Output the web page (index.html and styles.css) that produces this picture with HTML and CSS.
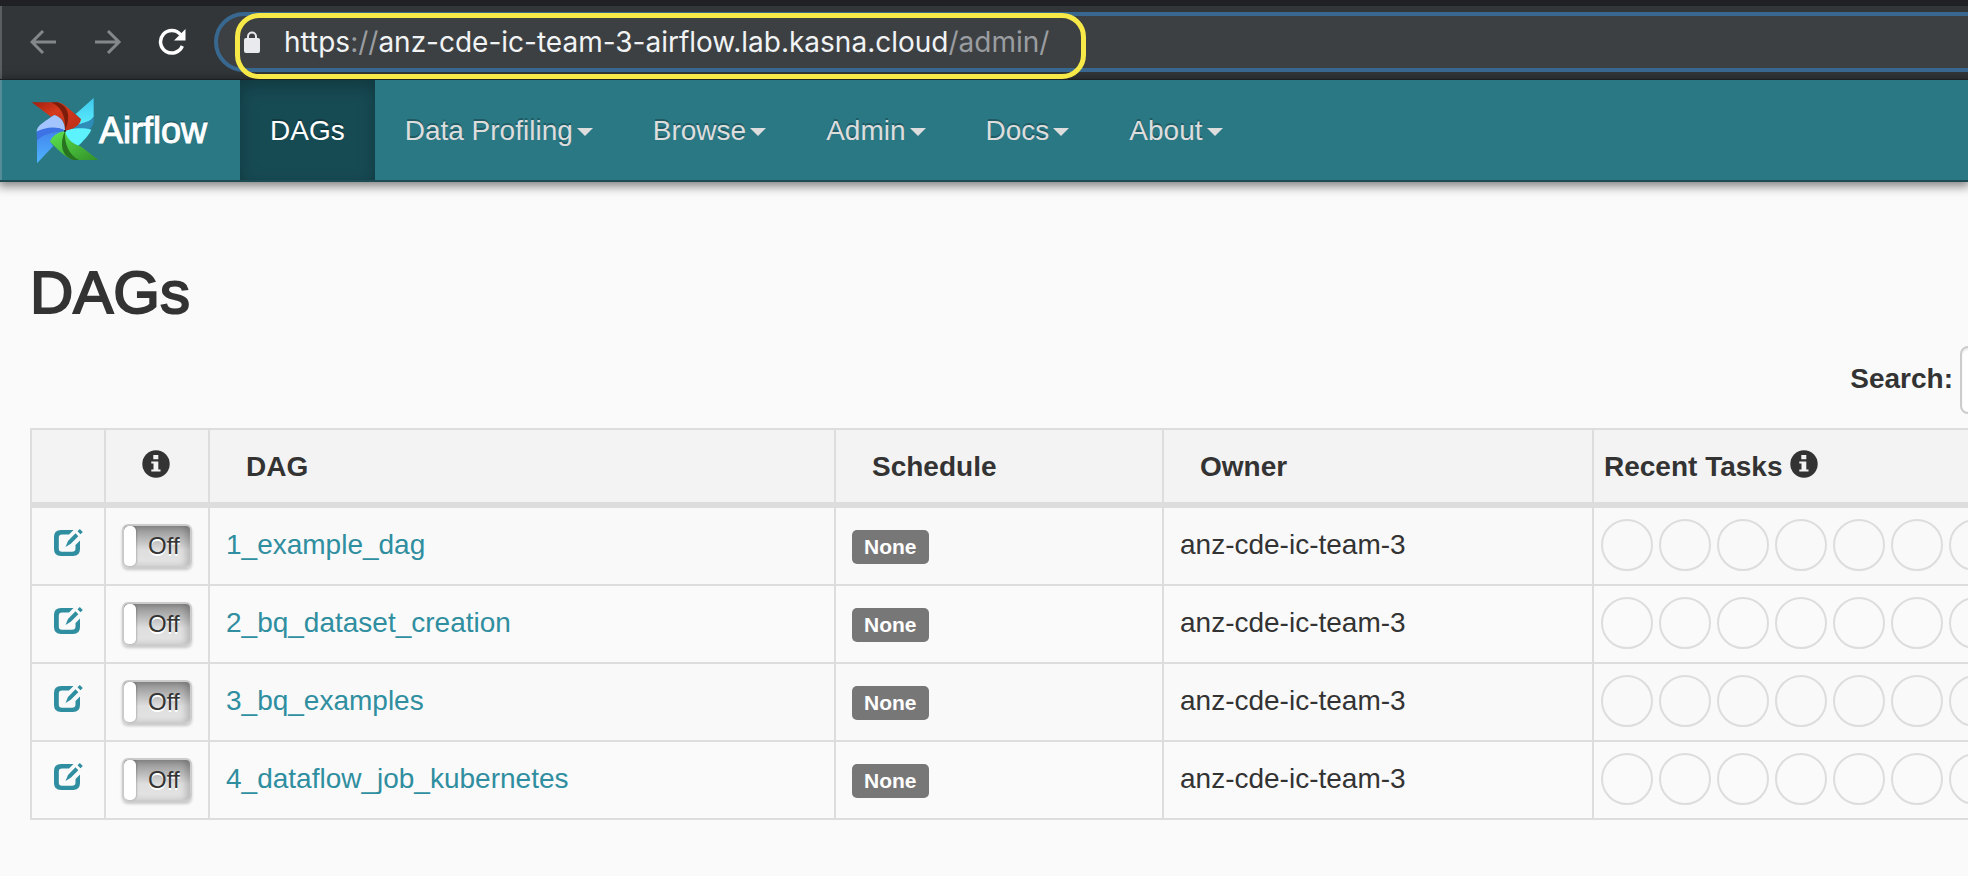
FILE: index.html
```html
<!DOCTYPE html>
<html lang="en">
<head>
<meta charset="utf-8">
<title>Airflow - DAGs</title>
<link rel="stylesheet" href="styles.css">
</head>
<body>
<svg class="defs" aria-hidden="true">
  <symbol id="edit" viewBox="0 0 30 30">
    <path d="M19.500 2H7Q0 2 0 9V21Q0 28 7 28H19Q26 28 26 21V12.500L21.500 17V20.500Q21.500 23.800 18 23.800H8Q4.800 23.800 4.800 20.500V9.500Q4.800 6.500 8 6.500H15Z" fill="currentColor"/>
    <path d="M11.500 19L14 13L21.500 5.300L24.300 8.200L16.800 15.800Z M23.500 3.300L25.800 1L28.800 4L26.500 6.300Z" fill="currentColor"/>
  </symbol>
  <symbol id="info" viewBox="0 0 28 28">
    <circle cx="14" cy="14" r="13.700" fill="currentColor"/>
    <path d="M11.300 5H16.300V9.300H11.300Z M9.300 11.500H16.300V19.500H18.500V21.500H9.300V19.500H11.500V13.500H9.300Z" fill="#f3f3f3"/>
  </symbol>
</svg>

<header class="browser">
  <button class="tool" aria-label="Back"><svg width="28" height="26" viewBox="0 0 28 26"><path d="M26 13H3M13 2L2 13L13 24" fill="none" stroke="#85888a" stroke-width="3"/></svg></button>
  <button class="tool" aria-label="Forward"><svg width="28" height="26" viewBox="0 0 28 26"><path d="M1 13H25M14 2L25 13L14 24" fill="none" stroke="#85888a" stroke-width="3"/></svg></button>
  <button class="tool" aria-label="Reload"><svg width="28" height="28" viewBox="0 0 28 28"><path d="M22.500 6.500A11.300 11.300 0 1 0 24.300 18" fill="none" stroke="#fff" stroke-width="3.500"/><path d="M27.500 1V12.500H16Z" fill="#fff"/></svg></button>
  <div class="address">
    <div class="marked">
      <svg class="lock" width="16" height="22" viewBox="0 0 16 22"><path d="M4 9V5.500A4 4 0 0 1 12 5.500V9" fill="none" stroke="#e8eaed" stroke-width="2"/><rect y="7" width="16" height="15" rx="2" fill="#e8eaed"/></svg>
      <span class="url">https<span class="dim">://</span>anz-cde-ic-team-3-airflow.lab.kasna.cloud<span class="dim">/admin/</span></span>
    </div>
  </div>
</header>

<nav class="navbar">
  <a class="brand" href="#">
    <svg width="68" height="68" viewBox="33 21 204 204" aria-hidden="true">
      <defs>
        <linearGradient id="red" x2="1" y2="1"><stop offset="0" stop-color="#a31d0c"/><stop offset=".4" stop-color="#d53a1d"/><stop offset="1" stop-color="#b92f17"/></linearGradient>
        <linearGradient id="cyan" x2="0" y2="1"><stop offset="0" stop-color="#3fc8ee"/><stop offset="1" stop-color="#5ff4ff"/></linearGradient>
        <linearGradient id="blue" x2="0" y2="1"><stop offset="0" stop-color="#4385ee"/><stop offset="1" stop-color="#4eb4ff"/></linearGradient>
        <linearGradient id="green" x2="1" y2="1"><stop offset="0" stop-color="#5fe552"/><stop offset="1" stop-color="#319127"/></linearGradient>
      </defs>
      <path d="M221 24L167 72L183 88L135 123C165 110 205 105 221 80Z" fill="url(#cyan)"/>
      <path d="M135 123C165 98 207 102 221 80V94C220 111 209 120 195 126Z" fill="#2f8bb8"/>
      <path d="M135 123C150 114 190 112 214 119C208 134 186 157 174 168C150 157 137 143 135 123Z" fill="#5cf3ff"/>
      <path d="M35 37H112C125 37 138 48 183 88C181 102 170 115 135 123C135 98 128 85 103 75L93 80Z" fill="url(#red)"/>
      <path d="M94 37H112C150 50 151 85 135 123C139 83 125 50 94 37Z" fill="#7c1d0b"/>
      <path d="M50 125C52 108 62 102 103 75C126 82 135 100 135 123C112 106 72 118 50 125Z" fill="#a3c4ff"/>
      <path d="M50 125C72 113 112 106 135 123C110 124 72 130 51 157Z" fill="#3d72e4"/>
      <path d="M51 220V151C70 132 100 126 135 123L90 154L100 168Z" fill="url(#blue)"/>
      <path d="M135 123C140 143 151 160 184 170L235 210H162C145 207 127 192 90 155C96 139 110 128 135 123Z" fill="url(#green)"/>
      <path d="M135 123C133 160 145 194 177 210H162C128 202 116 165 135 123Z" fill="#28731f"/>
      <circle cx="135" cy="123" r="3" fill="#0c1c20"/>
    </svg>
    <span>Airflow</span>
  </a>
  <a class="item active" href="#">DAGs</a>
  <a class="item" href="#">Data Profiling<i class="caret"></i></a>
  <a class="item" href="#">Browse<i class="caret"></i></a>
  <a class="item" href="#">Admin<i class="caret"></i></a>
  <a class="item" href="#">Docs<i class="caret"></i></a>
  <a class="item" href="#">About<i class="caret"></i></a>
</nav>

<main class="content">
  <h2>DAGs</h2>
  <div class="filter">
    <label for="search">Search:</label>
    <input id="search" type="search">
  </div>
  <table class="dags">
    <colgroup><col class="c-edit"><col class="c-toggle"><col class="c-dag"><col class="c-schedule"><col class="c-owner"><col></colgroup>
    <thead>
      <tr>
        <th></th>
        <th><svg class="info" role="img" aria-label="Info"><use href="#info"/></svg></th>
        <th>DAG</th>
        <th>Schedule</th>
        <th>Owner</th>
        <th class="recent">Recent Tasks<svg class="info" role="img" aria-label="Info"><use href="#info"/></svg></th>
      </tr>
    </thead>
    <tbody>
      <tr>
        <td><a href="#" aria-label="Edit"><svg class="edit"><use href="#edit"/></svg></a></td>
        <td><label class="toggle"><input type="checkbox">Off</label></td>
        <td><a href="#">1_example_dag</a></td>
        <td><span class="badge">None</span></td>
        <td>anz-cde-ic-team-3</td>
        <td><div class="tasks"><i></i><i></i><i></i><i></i><i></i><i></i><i></i></div></td>
      </tr>
      <tr>
        <td><a href="#" aria-label="Edit"><svg class="edit"><use href="#edit"/></svg></a></td>
        <td><label class="toggle"><input type="checkbox">Off</label></td>
        <td><a href="#">2_bq_dataset_creation</a></td>
        <td><span class="badge">None</span></td>
        <td>anz-cde-ic-team-3</td>
        <td><div class="tasks"><i></i><i></i><i></i><i></i><i></i><i></i><i></i></div></td>
      </tr>
      <tr>
        <td><a href="#" aria-label="Edit"><svg class="edit"><use href="#edit"/></svg></a></td>
        <td><label class="toggle"><input type="checkbox">Off</label></td>
        <td><a href="#">3_bq_examples</a></td>
        <td><span class="badge">None</span></td>
        <td>anz-cde-ic-team-3</td>
        <td><div class="tasks"><i></i><i></i><i></i><i></i><i></i><i></i><i></i></div></td>
      </tr>
      <tr>
        <td><a href="#" aria-label="Edit"><svg class="edit"><use href="#edit"/></svg></a></td>
        <td><label class="toggle"><input type="checkbox">Off</label></td>
        <td><a href="#">4_dataflow_job_kubernetes</a></td>
        <td><span class="badge">None</span></td>
        <td>anz-cde-ic-team-3</td>
        <td><div class="tasks"><i></i><i></i><i></i><i></i><i></i><i></i><i></i></div></td>
      </tr>
    </tbody>
  </table>
</main>
</body>
</html>
```
FILE: styles.css
```css
* { box-sizing: border-box; }

html, body { overflow: hidden; }

body {
  margin: 0;
  min-height: 100vh;
  background: #fafafa;
  color: #333;
  font: 28px/40px "Liberation Sans", Arial, sans-serif;
}

a { color: #2f8e9f; text-decoration: none; }
svg { display: block; flex: none; }
.defs { position: absolute; width: 0; height: 0; }

/* Browser toolbar */
.browser {
  display: flex;
  align-items: center;
  height: 80px;
  padding: 0 0 2px 30px;
  border-top: 6px solid #202124;
  border-bottom: 1px solid #26292b;
  background: #323639;
  box-shadow: inset 2px 0 #5b5e60;
}

.tool {
  display: flex;
  padding: 0;
  margin-right: 36px;
  border: 0;
  background: none;
}

.tool + .tool + .tool { margin-right: 28px; }

.address {
  display: flex;
  flex: 1;
  align-items: center;
  height: 60px;
  padding-left: 17px;
  margin-right: -40px;
  border: 4px solid #38688f;
  border-radius: 30px;
  background: #3c4043;
}

.marked {
  display: flex;
  flex: none;
  align-items: center;
  gap: 24px;
  width: 851px;
  height: 66px;
  padding: 0 0 8px 4px;
  margin-top: 8px;
  border: 5px solid #f7e948;
  border-radius: 24px;
}

.url {
  color: #f1f3f4;
  font: 28px/40px Inter, Roboto, sans-serif;
  white-space: nowrap;
}

.dim { color: #9a9da0; }

/* Airflow navigation */
.navbar {
  display: flex;
  height: 102px;
  border-bottom: 2px solid #1c4b53;
  background: #2a7884;
  box-shadow: inset 2px 0 #548d97, 0 2px 10px 2px rgba(0, 0, 0, .5);
}

.brand {
  display: flex;
  align-items: center;
  width: 240px;
  padding: 2px 0 0 31px;
  color: #fff;
  font-size: 36px;
  text-shadow: 0 -2px 0 rgba(0, 0, 0, .25);
  -webkit-text-stroke: 1px currentColor;
}

.item {
  display: flex;
  align-items: center;
  padding: 2px 30px 0;
  color: #ddd;
  text-shadow: 0 -2px 0 rgba(0, 0, 0, .25);
}

.active {
  color: #fff;
  background: #174b54;
  box-shadow: inset 0 6px 18px rgba(0, 0, 0, .25);
}

.caret {
  margin: 2px 0 0 4px;
  border: 8px solid transparent;
  border-top-color: currentColor;
  border-bottom: 0;
}

/* Page */
.content { padding: 78px 0 0 30px; }

h2 {
  margin: 0;
  font-size: 60px;
  font-weight: 400;
  line-height: 66px;
  -webkit-text-stroke: 2px currentColor;
}

.filter {
  display: flex;
  justify-content: flex-end;
  align-items: center;
  gap: 7px;
  margin: 20px -392px 14px 0;
  font-weight: 700;
}

.filter label { padding-bottom: 2px; }

.filter input {
  width: 400px;
  height: 68px;
  border: 2px solid #ccc;
  border-radius: 8px;
  background: #fff;
  box-shadow: inset 0 2px 2px rgba(0, 0, 0, .08);
}

.dags {
  width: calc(100% + 130px);
  table-layout: fixed;
  border-collapse: separate;
  border-spacing: 0;
  border: solid #ddd;
  border-width: 2px 0 0 2px;
}

.c-edit { width: 74px; }
.c-toggle { width: 104px; }
.c-dag { width: 626px; }
.c-schedule { width: 328px; }
.c-owner { width: 430px; }

.dags th {
  height: 78px;
  padding: 2px 0 0 36px;
  border: solid #ddd;
  border-width: 0 2px 6px 0;
  background: #f3f3f3;
  text-align: left;
}

.dags td {
  height: 78px;
  padding: 0 0 2px 16px;
  border: solid #ddd;
  border-width: 0 2px 2px 0;
}

.dags tbody tr:nth-child(odd) { background: #f9f9f9; }
.dags td:first-child { padding: 0 0 6px 22px; }
.dags td:last-child { padding: 0 0 2px 7px; }
.dags th.recent { padding-left: 10px; }

.info {
  display: inline-block;
  width: 28px;
  height: 28px;
  vertical-align: -2px;
}

.recent .info { margin-left: 8px; }

.edit { width: 30px; height: 30px; }

.toggle {
  display: flex;
  align-items: center;
  gap: 12px;
  width: 70px;
  height: 44px;
  margin-top: 2px;
  border: 2px solid #ccc;
  border-radius: 6px;
  background: linear-gradient(#8d8d8d, #dedede 60%, #e4e4e4);
  box-shadow: inset -4px 0 6px rgba(0, 0, 0, .18), 0 2px 3px rgba(0, 0, 0, .2);
  font-size: 24px;
  text-shadow: 0 2px 0 #fff;
}

.toggle input {
  appearance: none;
  width: 12px;
  height: 40px;
  margin: 0;
  border-radius: 5px;
  background: #fff;
  box-shadow: 1px 0 2px rgba(0, 0, 0, .2);
}

.badge {
  display: block;
  width: max-content;
  padding: 0 12px;
  margin-top: 4px;
  border-radius: 5px;
  background: #777;
  color: #fff;
  font-size: 21px;
  font-weight: 700;
  line-height: 34px;
}

.tasks {
  display: flex;
  gap: 6px;
}

.tasks i {
  flex: none;
  width: 52px;
  height: 52px;
  border: 2px solid #ddd;
  border-radius: 50%;
}
```
